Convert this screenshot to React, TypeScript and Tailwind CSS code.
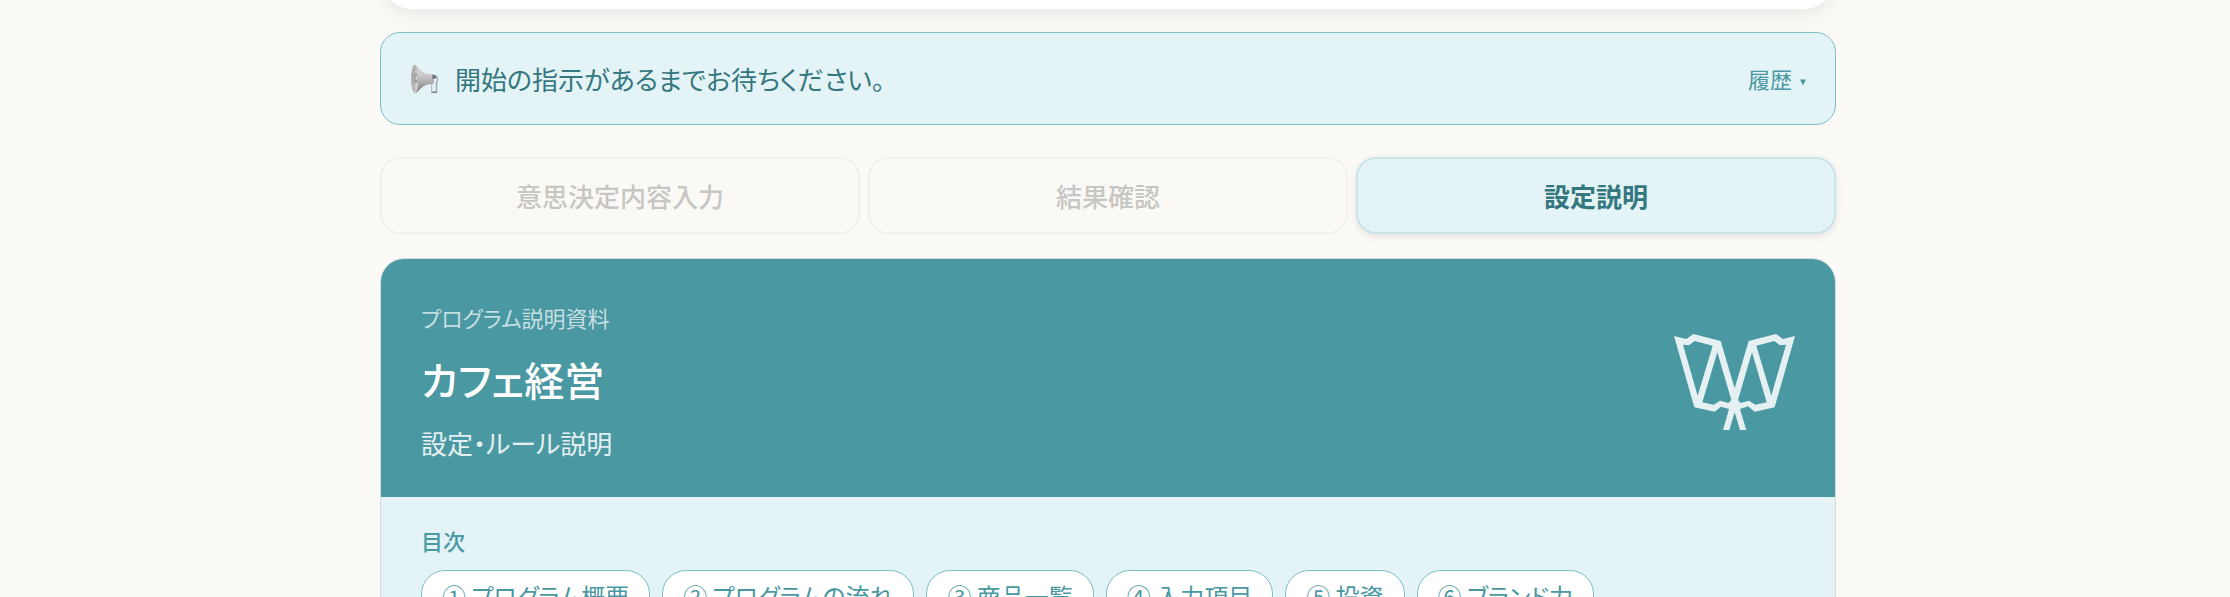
import React from 'react';

const tabs = [
  { label: '意思決定内容入力', active: false },
  { label: '結果確認', active: false },
  { label: '設定説明', active: true },
];

const chapters = [
  '① プログラム概要',
  '② プログラムの流れ',
  '③ 商品一覧',
  '④ 入力項目',
  '⑤ 投資',
  '⑥ ブランド力',
];

function Megaphone() {
  return (
    <svg className="w-[30px] h-[30px] shrink-0" viewBox="0 0 30 30">
      <defs>
        <linearGradient id="horn" x1="0" y1="0" x2="0" y2="1">
          <stop offset="0" stopColor="#dcdadc" />
          <stop offset="0.4" stopColor="#c9c6c8" />
          <stop offset="0.7" stopColor="#a39fa0" />
          <stop offset="1" stopColor="#858081" />
        </linearGradient>
        <linearGradient id="bell" x1="0" y1="0" x2="1" y2="0.3">
          <stop offset="0" stopColor="#a19e9f" />
          <stop offset="0.6" stopColor="#bab7b8" />
          <stop offset="1" stopColor="#d8d6d8" />
        </linearGradient>
      </defs>
      <path d="M22 12.500h4.500l1 1.500v3l-1 1V28h-4.500V19" fill="none" stroke="#a3aebb" strokeWidth="1.5" />
      <path d="M22.800 19.500v8M25.200 13v5" stroke="#e9f1f8" strokeWidth="1.200" />
      <path d="M21.500 28.300h5.300" stroke="#75757d" strokeWidth="1.100" />
      <path d="M5 .8C8 2 10 7.500 16 9.500l8 1.300v8.400l-7 1.500c-5 1.300-8 6.500-11.500 8.600z" fill="url(#horn)" />
      <path d="M22.300 10.500l3.800.7v3.200l-3.800.9z" fill="#77777f" />
      <ellipse cx="4.800" cy="15" rx="3.600" ry="14.200" fill="url(#bell)" />
      <ellipse cx="6" cy="14.500" rx="2" ry="4.600" fill="#989496" />
      <ellipse cx="6.400" cy="14" rx="1" ry="2.500" fill="#dedddf" />
    </svg>
  );
}

function Logo() {
  return (
    <svg className="mt-2 w-[121px] h-24 shrink-0" viewBox="102 72 363 288">
      <path
        fill="#fff"
        fillOpacity="0.85"
        fillRule="evenodd"
        d="M102 78L139 87L160 72L242 93L284 235L326 93L408 72L429 87L465 78L404 292L344 305L324 289L300 297L319 360H300L284 307L268 360H249L267 297L243 290L224 305L163 292Z
          M129 104L173 257L218 107L164 93L147 106Z
          M232 127L187 277L221 284L240 272L266 279L274 270Z
          M438 104L394 257L349 107L403 93L420 106Z
          M336 127L380 277L346 284L327 272L302 279L294 270Z"
      />
    </svg>
  );
}

export default function App() {
  return (
    <div
      className="h-[597px] overflow-hidden bg-[#fcfaf6] pl-[380px] font-['Noto_Sans_CJK_JP',sans-serif]"
      style={{ fontFeatureSettings: '"palt"' }}
    >
      <div className="w-[1456px]">
        <div className="h-2.5 flex flex-col justify-end">
          <div className="h-[100px] shrink-0 rounded-[32px] border border-[#e3f3f6] bg-white shadow-[0_8px_40px_rgba(74,152,162,0.06),0_4px_16px_rgba(0,0,0,0.05)]" />
        </div>

        <div className="relative mt-[22px] flex h-[93px] items-center rounded-[20px] border border-[#7cbfc6] bg-[#e3f3f6] px-[29px]">
          <Megaphone />
          <p className="ml-[15px] flex-1 text-[26px] text-[#35777f]">開始の指示があるまでお待ちください。</p>
          <button className="flex items-center gap-2 text-[22px] text-[#4a98a2]">
            履歴
            <svg className="mt-2 w-[6px] h-[7px]" viewBox="0 0 6 7">
              <path d="M0 .5h6L3 6.500z" fill="currentColor" />
            </svg>
          </button>
        </div>

        <nav className="mt-8 grid grid-cols-3 gap-2">
          {tabs.map((tab) => (
            <button
              key={tab.label}
              className={
                tab.active
                  ? 'h-[77px] rounded-[20px] border-2 border-[#c9e5e8] bg-[#e3f3f6] text-[26px] font-bold text-[#35777f] shadow-[0_2px_8px_rgba(0,0,0,0.1)]'
                  : 'h-[77px] rounded-[20px] border-2 border-[#f2f1ed] bg-[#fbf9f5] text-[26px] font-medium text-[#c8c6c2]'
              }
            >
              {tab.label}
            </button>
          ))}
        </nav>

        <section className="mt-6 h-[500px] overflow-hidden rounded-[24px] border border-[#dddcdc] bg-[#e3f3f6]">
          <header className="flex h-[238px] items-center justify-between bg-[#4a98a2] px-10">
            <div className="pt-1">
              <p className="text-[22px] leading-[38px] text-white/70">プログラム説明資料</p>
              <h1 className="mt-[13px] text-[40px] leading-[60px] font-medium text-white">カフェ経営</h1>
              <p className="mt-[14px] text-[26px] leading-[40px] text-white/85">設定・ルール説明</p>
            </div>
            <Logo />
          </header>
          <div className="px-10 pt-[25px]">
            <h2 className="text-[22px] leading-[36px] font-medium text-[#4a98a2]">目次</h2>
            <div className="mt-3 flex gap-3">
              {chapters.map((chapter) => (
                <a
                  key={chapter}
                  className="h-[52px] rounded-[24px] border border-[#7cbfc6] bg-white px-5 text-[24px] leading-[50px] whitespace-nowrap text-[#4a98a2]"
                >
                  {chapter}
                </a>
              ))}
            </div>
          </div>
        </section>
      </div>
    </div>
  );
}
